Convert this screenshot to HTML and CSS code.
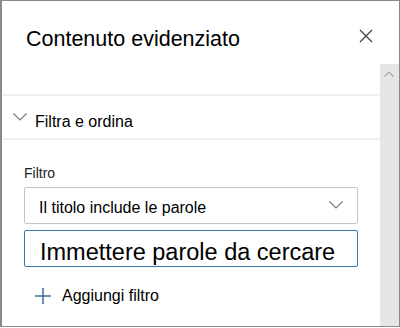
FILE: index.html
```html
<!DOCTYPE html>
<html lang="it">
<head>
    <meta charset="UTF-8">
    <meta name="viewport" content="width=device-width, initial-scale=1.0">
    <title>Contenuto evidenziato</title>
    <link rel="stylesheet" href="styles.css">
</head>
<body>

    <div class="panel">
        <!-- Header with title and close button -->
        <div class="panel-header">
            <h1 class="panel-title">Contenuto evidenziato</h1>
            <svg class="close" width="14" height="14" viewBox="0 0 14 14">
                <path d="M1 1 L13 13 M13 1 L1 13" stroke="#444" stroke-width="1.3" fill="none"/>
            </svg>
        </div>

        <div class="scroll-area">
            <div class="content">
                <div class="group-end"></div>

                <!-- Collapsible section -->
                <div class="section-header">
                    <svg class="chevron" width="14" height="8" viewBox="0 0 14 8">
                        <path d="M0.5 0.5 L7 7 L13.5 0.5" stroke="#777" stroke-width="1.1" fill="none"/>
                    </svg>
                    <span class="section-title">Filtra e ordina</span>
                </div>

                <div class="section-body">
                    <label class="field-label">Filtro</label>
                    <div class="dropdown">
                        <span class="dropdown-text">Il titolo include le parole</span>
                        <svg class="dropdown-caret" width="14" height="8" viewBox="0 0 14 8">
                            <path d="M0.5 0.5 L7 7 L13.5 0.5" stroke="#777" stroke-width="1.1" fill="none"/>
                        </svg>
                    </div>
                    <input class="search-input" type="text" value="Immettere parole da cercare">
                    <div class="add-filter">
                        <svg class="plus" width="16" height="16" viewBox="0 0 16 16">
                            <path d="M8 0 V16 M0 8 H16" stroke="#3d6fa6" stroke-width="1.5" fill="none"/>
                        </svg>
                        <span>Aggiungi filtro</span>
                    </div>
                </div>
            </div>

            <!-- Fake scrollbar -->
            <div class="scrollbar">
                <svg class="scroll-up" width="10" height="6" viewBox="0 0 10 6">
                    <path d="M0.5 5.5 L5 1 L9.5 5.5" stroke="#a0a0a0" stroke-width="1.1" fill="none"/>
                </svg>
            </div>
        </div>
    </div>

</body>
</html>
```

FILE: styles.css
```css
body, html {
    margin: 0;
    padding: 0;
    background-color: #fff;
    font-family: "Liberation Sans", Arial, sans-serif;
    color: #000;
}

/* Outer panel frame */
.panel {
    width: 400px;
    height: 327px;
    box-sizing: border-box;
    border: 1px solid #8a8a8a;
    border-left-width: 2px;
    display: flex;
    flex-direction: column;
}

/* Title row */
.panel-header {
    display: flex;
    justify-content: space-between;
    align-items: flex-start;
    padding: 26px 26px 13px 24px;
}

.panel-title {
    margin: 0;
    font-size: 21.5px;
    font-weight: normal;
    line-height: 24px;
}

.close {
    margin-top: 2px;
}

/* Content + scrollbar */
.scroll-area {
    flex: 1;
    display: flex;
    min-height: 0;
}

.content {
    flex: 1;
}

.group-end {
    height: 30px;
    border-bottom: 2px solid #f1f1f1;
}

.section-header {
    display: flex;
    align-items: flex-start;
    height: 44px;
    box-sizing: border-box;
    padding: 16px 0 0 11px;
    border-bottom: 2px solid #f1f1f1;
}

.chevron {
    margin-top: 1px;
    margin-right: 8px;
}

.section-title {
    font-size: 16px;
    line-height: 20px;
}

.section-body {
    padding: 24px 22px 0 22px;
}

.field-label {
    display: block;
    font-size: 14px;
    line-height: 18px;
    color: #222;
}

/* Select-like box */
.dropdown {
    margin-top: 5px;
    height: 37px;
    box-sizing: border-box;
    border: 1px solid #c6c6c6;
    border-radius: 2px;
    padding: 10px 14px 0 14px;
    display: flex;
    justify-content: space-between;
    align-items: flex-start;
}

.dropdown-text {
    font-size: 16px;
    line-height: 20px;
}

.dropdown-caret {
    margin-top: 3px;
}

.search-input {
    display: block;
    margin: 6px 0 0 0;
    width: 100%;
    height: 37px;
    box-sizing: border-box;
    border: 1px solid #3f75ae;
    border-radius: 2px;
    padding: 7px 0 0 15px;
    font-family: "Liberation Sans", Arial, sans-serif;
    font-size: 23.5px;
    color: #000;
    background: #fff;
    outline: none;
}

.add-filter {
    display: flex;
    align-items: center;
    margin-top: 19px;
    padding-left: 11px;
    font-size: 16px;
    line-height: 20px;
}

.plus {
    margin-right: 11px;
}

/* Scrollbar track */
.scrollbar {
    width: 19px;
    background-color: #e6e6e6;
}

.scroll-up {
    display: block;
    margin: 7px 0 0 4px;
}
```
